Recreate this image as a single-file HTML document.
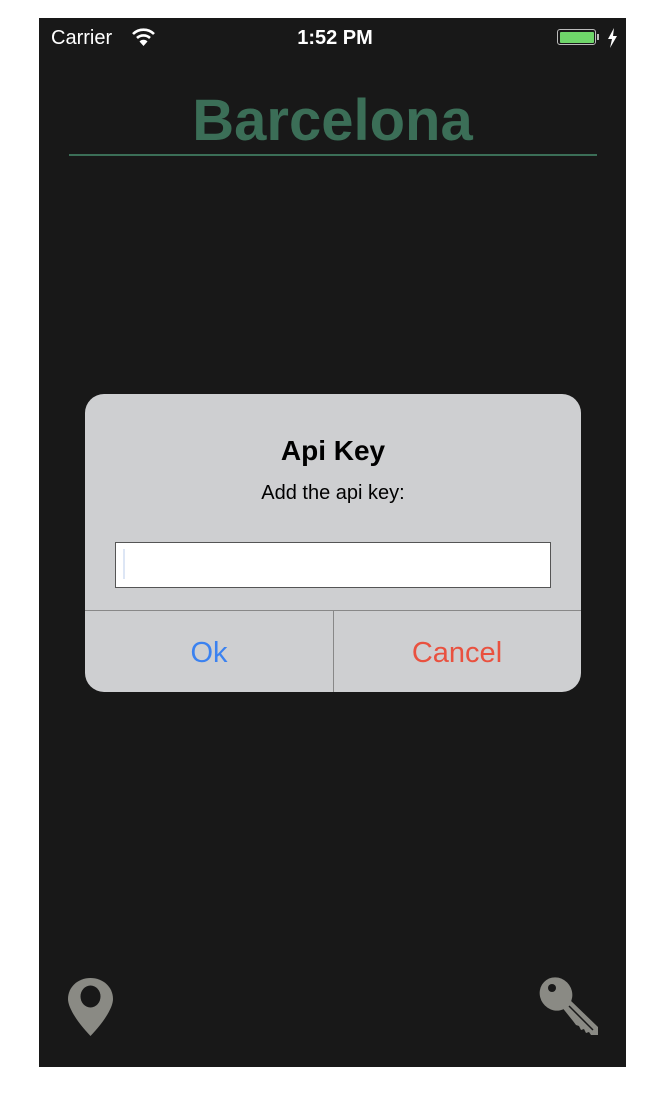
<!DOCTYPE html>
<html><head><style>
body{margin:0;width:654px;height:1096px;background:#fff;position:relative;overflow:hidden;font-family:"Liberation Sans",sans-serif}
.ph{position:absolute;left:39px;top:18px;width:587px;height:1049px;background:#181818}
.a{position:absolute}
</style></head><body>
<div class="ph"></div>
<div class="a" style="left:51px;top:27px;color:#fff;font-size:20px">Carrier</div>
<svg class="a" style="left:131px;top:27px" width="25" height="20" viewBox="0 0 25 20"><path d="M2 7a15 15 0 0 1 21 0" stroke="#fff" stroke-width="2.6" fill="none"/><path d="M6 11a9.5 9.5 0 0 1 13 0" stroke="#fff" stroke-width="2.6" fill="none"/><path d="M8.5 14.5L12.5 19L16.5 14.5A5.5 5.5 0 0 0 8.5 14.5Z" fill="#fff"/></svg>
<div class="a" style="left:0;width:654px;text-align:center;top:27px;color:#fff;font-size:20px;font-weight:bold;padding-left:16px;box-sizing:border-box">1:52 PM</div>
<div class="a" style="left:557px;top:29px;width:39px;height:16px;border:1.5px solid #bbb;border-radius:3px;box-sizing:border-box;padding:1.5px"><div style="width:100%;height:100%;background:#6fd66a;border-radius:1px"></div></div>
<div class="a" style="left:597px;top:34px;width:2px;height:6px;background:#bbb"></div>
<svg class="a" style="left:606px;top:28px" width="12" height="20" viewBox="0 0 12 20"><path d="M8 0L2 11h4l-2 9 7-12H7z" fill="#fff"/></svg>
<div class="a" style="left:39px;width:587px;text-align:center;top:87px;color:#3b6e57;font-size:58px;font-weight:bold">Barcelona</div>
<div class="a" style="left:69px;top:154px;width:528px;height:2px;background:#3b6e57"></div>

<div class="a" style="left:85px;top:394px;width:496px;height:298px;background:#cecfd1;border-radius:19px;overflow:hidden">
<div class="a" style="left:0;width:100%;top:41px;text-align:center;font-size:28px;font-weight:bold;color:#000">Api Key</div>
<div class="a" style="left:0;width:100%;top:88px;text-align:center;font-size:20px;color:#000">Add the api key:</div>
<div class="a" style="left:30px;top:148px;width:436px;height:46px;background:#fff;border:1px solid #555;box-sizing:border-box"></div>
<div class="a" style="left:38px;top:155px;width:2px;height:30px;background:#dde6f5"></div>
<div class="a" style="left:0;top:216px;width:100%;height:1px;background:#888"></div>
<div class="a" style="left:248px;top:216px;width:1px;height:82px;background:#888"></div>
<div class="a" style="left:0;width:248px;top:243px;text-align:center;font-size:29px;color:#3b82f0">Ok</div>
<div class="a" style="left:248px;width:248px;top:243px;text-align:center;font-size:29px;color:#e9513f">Cancel</div>
</div>

<svg class="a" style="left:67px;top:977px" width="47" height="60" viewBox="0 0 47 60"><path d="M23.5 1C11 1 1 10 1 22c0 9 10 24 22.5 37C36 46 46 31 46 22 46 10 36 1 23.5 1Z" fill="#8a8a84"/><ellipse cx="23.5" cy="19.5" rx="10" ry="11" fill="#181818"/></svg>
<svg class="a" style="left:539px;top:976px" width="60" height="62" viewBox="0 0 60 62"><g fill="#8a8a84"><ellipse cx="17" cy="18" rx="16" ry="17" transform="rotate(-35 17 18)"/><path d="M22 30L30 23L59 51V59H52L50 56L47 57L45 53L42 54L40 50L37 49L34 45Z"/></g><circle cx="13" cy="12" r="4" fill="#181818"/><path d="M30 30L54 54" stroke="#181818" stroke-width="1.5"/></svg>
</body></html>
